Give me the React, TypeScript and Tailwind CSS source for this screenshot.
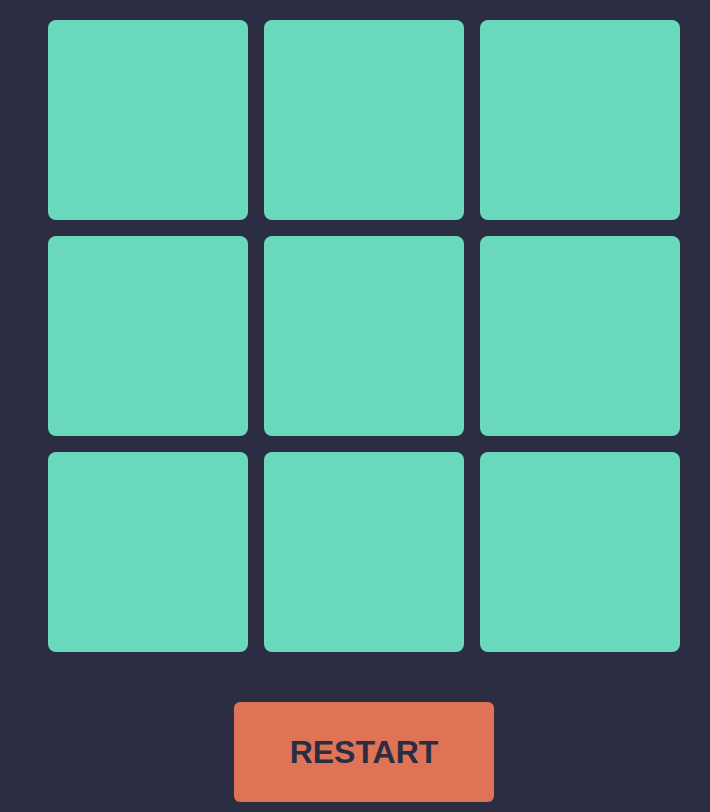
export default function App() {
  const cells = Array.from({ length: 9 }, (_, i) => i);
  return (
    <div className="min-h-[812px] w-full bg-[#2b2d42] pl-[48px] pt-[20px] font-['Liberation_Sans',Arial,sans-serif]">
      <div className="w-[632px]">
        <div className="grid grid-cols-[repeat(3,200px)] gap-4">
          {cells.map((c) => (
            <button key={c} className="h-[200px] w-[200px] rounded-lg bg-[#6bd9bc]" />
          ))}
        </div>
        <div className="mt-[50px] flex justify-center">
          <button className="h-[100px] w-[260px] rounded-md bg-[#df7356] text-[32px] font-bold text-[#2b2d42]">
            RESTART
          </button>
        </div>
      </div>
    </div>
  );
}
